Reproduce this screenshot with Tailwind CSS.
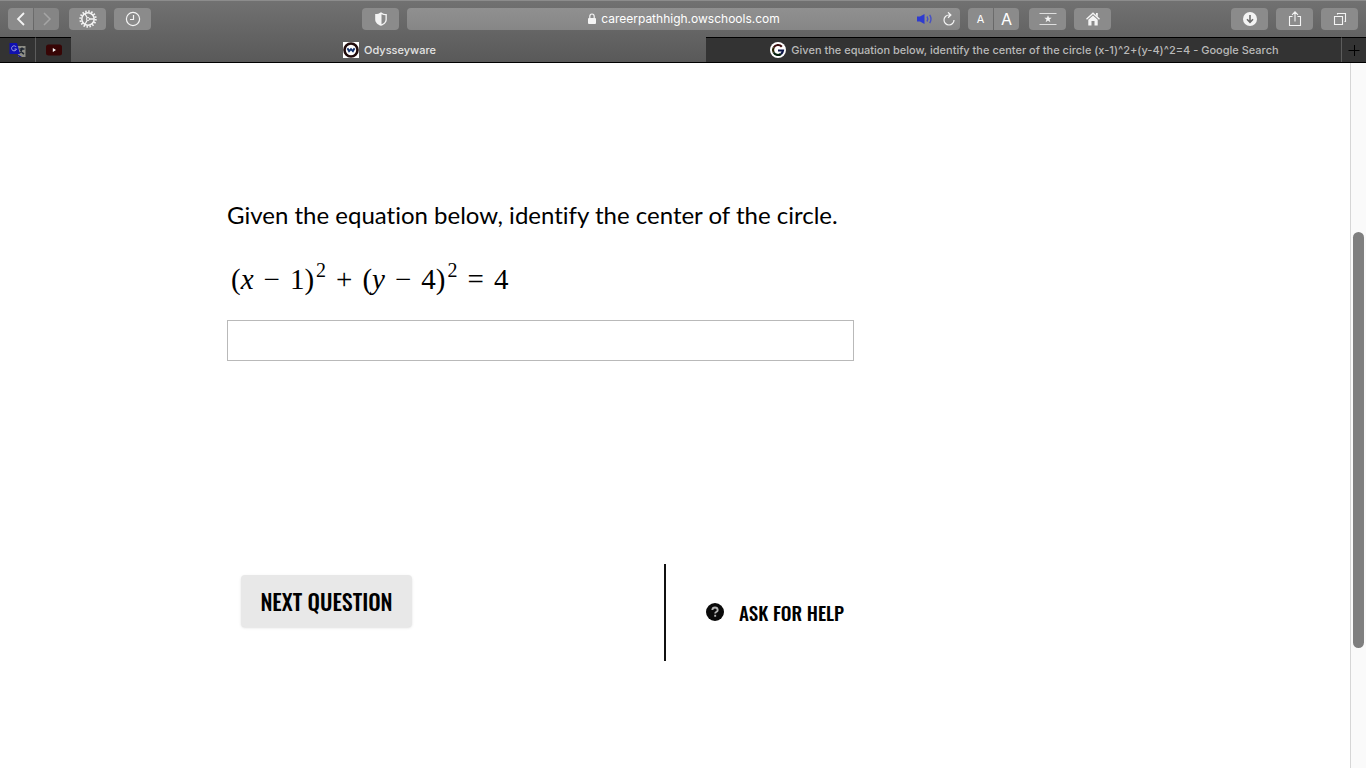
<!DOCTYPE html>
<html lang="en">
<head>
    <meta charset="UTF-8">
    <meta name="viewport" content="width=device-width, initial-scale=1.0">
    <title>Odysseyware</title>
    <script src="https://cdn.jsdelivr.net/npm/@tailwindcss/browser@4"></script>
</head>
<body class="flex h-screen flex-col overflow-hidden bg-white font-['Inter',sans-serif] text-black">

    <!-- Browser chrome -->
    <header class="shrink-0 border-t border-b border-t-[#8c8c8c] border-b-black bg-linear-to-b from-[#717171] to-[#595959]">

        <!-- Toolbar -->
        <div class="flex h-9 items-center gap-2 px-2 text-white">
            <div class="flex w-[391px] justify-between">
                <div class="flex gap-2">
                    <div class="mr-[2px] flex gap-px">
                        <button aria-label="Back" class="flex h-[22px] w-[25px] items-center justify-center rounded-l bg-[#8b8b8b]">
                            <svg class="h-4 w-4" viewBox="0 0 16 16" fill="none" stroke="#f4f4f4" stroke-width="1.8"><path d="M11 2 5 8l6 6"/></svg>
                        </button>
                        <button aria-label="Forward" class="flex h-[22px] w-[25px] items-center justify-center rounded-r bg-[#858585]">
                            <svg class="h-4 w-4" viewBox="0 0 16 16" fill="none" stroke="#a5a5a5" stroke-width="1.5"><path d="m5 2 6 6-6 6"/></svg>
                        </button>
                    </div>
                    <button aria-label="Settings" class="flex h-[22px] w-[37px] items-center justify-center rounded bg-[#8b8b8b]">
                        <svg class="h-[18px] w-[18px]" viewBox="0 0 18 18" fill="none" stroke="#f4f4f4">
                            <circle cx="9" cy="9" r="7.7" stroke-width="2" stroke-dasharray="1.5 1.524"/>
                            <circle cx="9" cy="9" r="6.2" stroke-width="1.5"/>
                            <circle cx="9" cy="9" r="1.5"/>
                            <path d="M10.5 9H15M8.2 7.7 6 3.8M8.2 10.3 6 14.2" stroke-width="1.3"/>
                        </svg>
                    </button>
                    <button aria-label="History" class="flex h-[22px] w-[37px] items-center justify-center rounded bg-[#8b8b8b]">
                        <svg class="h-4 w-4" viewBox="0 0 16 16" fill="none" stroke="#f4f4f4" stroke-width="1.2"><circle cx="8" cy="8" r="6.6"/><path d="M8.5 4v4.5H5"/></svg>
                    </button>
                </div>
                <button aria-label="Privacy report" class="flex h-[22px] w-[37px] items-center justify-center rounded bg-[#8b8b8b]">
                    <svg class="h-[14px] w-[14px]" viewBox="0 0 14 14"><path d="M7 .2c1.7 1.3 3.5 1.8 5.8 1.9v5.3c0 3.2-2.7 5.2-5.8 6.4-3.1-1.2-5.8-3.2-5.8-6.4V2.1C3.5 2 5.3 1.5 7 .2z" fill="#f4f4f4"/><path d="M7.5 2.2c1.2.7 2.6 1 4 1.1v4.1c0 2.3-1.7 3.9-4 4.9z" fill="#8b8b8b"/></svg>
                </button>
            </div>

            <div class="flex h-[22px] min-w-0 flex-1 items-center rounded bg-linear-to-b from-[#909090] to-[#868686] pr-1">
                <div class="w-11"></div>
                <div class="flex flex-1 items-center justify-center gap-1 text-[12px]">
                    <svg class="h-3 w-[10px]" viewBox="0 0 10 12"><rect x="1" y="5" width="8" height="6" rx="1" fill="#f4f4f4"/><path d="M2.8 5.5v-2a2.2 2.5 0 0 1 4.4 0v2" fill="none" stroke="#f4f4f4" stroke-width="1.2"/></svg>
                    <span>careerpathhigh.owschools.com</span>
                </div>
                <div class="flex gap-2">
                    <button aria-label="Mute this tab"><svg class="h-[14px] w-[18px]" viewBox="0 0 18 14"><path d="M1 4.5h3L8.500 2v10L4 9.500H1z" fill="#2e3bd0"/><path d="M11 4.500q1.600 2.500 0 5M13.700 2.800q2.600 4.200 0 8.400" fill="none" stroke="#4650c4" stroke-width="1.4"/></svg></button>
                    <button aria-label="Reload"><svg class="h-[14px] w-[14px]" viewBox="0 0 14 14" fill="none" stroke="#f4f4f4" stroke-width="1.2"><path d="M8.5 3H7a5 5 0 1 0 5 5M6 .3 8.900 3 6 5.800"/></svg></button>
                </div>
            </div>

            <div class="flex w-[390px] justify-between">
                <div class="flex gap-2">
                    <div class="mr-[2px] flex gap-px">
                        <button aria-label="Smaller text" class="h-[22px] w-[25px] rounded-l bg-[#8b8b8b] text-[11px]">A</button>
                        <button aria-label="Larger text" class="h-[22px] w-[25px] rounded-r bg-[#8b8b8b] text-[16px] leading-[22px]">A</button>
                    </div>
                    <button aria-label="Favorites" class="flex h-[22px] w-[37px] items-center justify-center rounded bg-[#8b8b8b]">
                        <svg class="h-[14px] w-[18px]" viewBox="0 0 18 14"><path d="M.5 1.5h17M.5 12.5h17" stroke="#dedede"/><path d="m9 3.200 1 2.600h2.700l-2.200 1.700.9 2.700L9 8.600l-2.400 1.600.9-2.700-2.200-1.700H8z" fill="#f4f4f4"/></svg>
                    </button>
                    <button aria-label="Home" class="flex h-[22px] w-[37px] items-center justify-center rounded bg-[#8b8b8b]">
                        <svg class="h-[14px] w-[14px]" viewBox="0 0 14 14"><path d="M.5 7.3 7 1.2l6.500 6.100" fill="none" stroke="#f4f4f4" stroke-width="1.4"/><path d="M10 1h1.800v4L10 3.300zM2.300 7.800 7 3.500l4.700 4.300V13.500H8.500V9h-3v4.500H2.300z" fill="#f4f4f4"/></svg>
                    </button>
                </div>
                <div class="flex gap-2">
                    <button aria-label="Downloads" class="flex h-[22px] w-[37px] items-center justify-center rounded bg-[#8b8b8b]">
                        <svg class="h-[14px] w-[14px]" viewBox="0 0 14 14"><circle cx="7" cy="7" r="7" fill="#f4f4f4"/><path d="M7 3v7M4 7.3l3 3 3-3" fill="none" stroke="#6e6e6e" stroke-width="1.6"/></svg>
                    </button>
                    <button aria-label="Share" class="flex h-[22px] w-[37px] items-center justify-center rounded bg-[#8b8b8b]">
                        <svg class="h-4 w-4" viewBox="0 0 16 16" fill="none" stroke="#f4f4f4" stroke-width="1.1"><path d="M5.5 5.5h-3v9h11v-9h-3M8 10.500V1M5 3.800l3-3 3 3"/></svg>
                    </button>
                    <button aria-label="Show all tabs" class="flex h-[22px] w-[37px] items-center justify-center rounded bg-[#8b8b8b]">
                        <svg class="h-[14px] w-[14px]" viewBox="0 0 14 14" fill="none" stroke="#f4f4f4" stroke-width="1.1"><path d="M1.5 4.500h8v8h-8zM4.500 2.500v-1h8v8h-1"/></svg>
                    </button>
                </div>
            </div>
        </div>

        <!-- Tabs -->
        <nav class="flex h-[25px] text-[11px] font-medium">
            <a href="#" aria-label="Google Translate" class="flex w-9 items-center justify-center border-t border-r border-t-black border-r-[#5c5c5c] bg-[#333333]">
                <svg class="h-4 w-[17px]" viewBox="0 0 17 16"><path d="M7 4h9.500v11H9.500z" fill="#8e8e86"/><path d="m8 12 2 3h3z" fill="#10108a"/><path d="M10.500 7h5M13 5.500V7q-.5 3-2.500 4M11.500 8q1 2.500 3.500 4" stroke="#1c2430" stroke-width="1.500" fill="none"/><path d="M.5 1h7.500l3 11H.5z" fill="#1010b0"/><path d="M7.200 5A2.500 2.500 0 1 0 7.500 7H5.500" fill="none" stroke="#9b9be0"/></svg>
            </a>
            <a href="#" aria-label="YouTube" class="flex w-[35px] items-center justify-center border-t border-black bg-[#333333]">
                <svg class="h-3 w-4" viewBox="0 0 16 12"><rect y=".5" width="16" height="11" rx="2.5" fill="#370505"/><path d="M6.800 4v4L10 6z" fill="#fff"/></svg>
            </a>
            <a href="#" class="flex flex-1 items-center justify-center gap-[5px] border-t border-transparent pl-[2px] text-[#e4e4e4]">
                <svg class="h-4 w-4" viewBox="0 0 16 16"><path d="M0 0h16v16H0z" fill="#fff"/><circle cx="8" cy="8" r="6.500" fill="#fff" stroke="#200b0b" stroke-width="2.600"/><path d="m4.500 6.300 1.600 2.900L8 7.200l1.900 2 1.600-2.900" fill="none" stroke="#12306b" stroke-width="1.900"/></svg>
                <span>Odysseyware</span>
            </a>
            <a href="#" class="flex flex-1 items-center justify-center gap-[5px] border-t border-black bg-[#333333] pl-[2px] text-[#b9b9b9]">
                <svg class="h-4 w-4" viewBox="0 0 16 16"><circle cx="8" cy="8" r="8" fill="#fff"/><path d="M11.800 4.700A5 5 0 0 0 3.700 5.500" fill="none" stroke="#3a0c0c" stroke-width="2.200"/><path d="M3.700 5.500a5 5 0 0 0 0 5" fill="none" stroke="#262200" stroke-width="2.200"/><path d="M3.700 10.500a5 5 0 0 0 7.300 1.500" fill="none" stroke="#04200c" stroke-width="2.200"/><path d="M11 12a5 5 0 0 0 2-3.500H8" fill="none" stroke="#0b1548" stroke-width="2.200"/></svg>
                <span class="whitespace-nowrap">Given the equation below, identify the center of the circle (x-1)^2+(y-4)^2=4 - Google Search</span>
            </a>
            <button aria-label="New tab" class="flex w-[25px] items-center justify-center border-t border-l border-t-black border-l-[#5c5c5c] bg-[#333333]">
                <svg class="h-3 w-3" viewBox="0 0 12 12" stroke="#000"><path d="M.5 6.500h11M6.500 1v11"/></svg>
            </button>
        </nav>
    </header>

    <div class="flex min-h-0 flex-1">
        <!-- Question -->
        <main class="flex-1 pt-[136px] pl-[227px]">
            <div class="w-full max-w-[627px]">
                <label for="answer" class="block">
                    <span class="block font-['Lato',sans-serif] text-[24px] leading-8 whitespace-nowrap [font-variant-ligatures:none]">Given the equation below, identify the center of the circle.</span>
                    <span class="mt-7 flex h-10 items-center gap-[10px] pl-1 font-['Liberation_Serif',serif] text-[29px] leading-10">
                        <span>(<i>x</i></span><span>−</span><span>1)<sup class="-top-3 pl-[2px] text-[20px]">2</sup></span>
                        <span>+</span>
                        <span>(<i>y</i></span><span>−</span><span>4)<sup class="-top-3 pl-[2px] text-[20px]">2</sup></span>
                        <span>=</span><span>4</span>
                    </span>
                </label>
                <input id="answer" type="text" class="mt-[21px] block h-[41px] w-full border border-[#b9b9b9] px-2 text-xl outline-none">

                <div class="mt-[203px] flex font-['Oswald','Liberation_Sans_Narrow',sans-serif] font-medium">
                    <div class="flex-1 pt-[11px] pl-[14px]">
                        <button class="h-[52px] w-[171px] rounded bg-[#e8e8e8] text-[22px] whitespace-nowrap shadow-sm">NEXT QUESTION</button>
                    </div>
                    <div class="flex h-[97px] w-[190px] items-center border-l-2 border-[#111111] pl-[39px]">
                        <a href="#" class="flex items-center gap-[14px] text-[19px] whitespace-nowrap">
                            <svg class="h-5 w-5" viewBox="0 0 20 20"><circle cx="10" cy="9" r="9" fill="#0a0a0a"/><path d="M7.300 7q.2-2.500 2.700-2.500T12.700 7q0 1.300-1.500 2-1 .5-1 1.600M10.200 11.800v2" fill="none" stroke="#b5b5b5" stroke-width="1.900"/></svg>
                            <span>ASK FOR HELP</span>
                        </a>
                    </div>
                </div>
            </div>
        </main>

        <!-- Scrollbar -->
        <div class="w-4 border-l border-[#d6d6d6] bg-[#fafafa] px-[2px] pt-[169px]">
            <div class="h-[416px] w-[11px] rounded-full bg-[#7f7f7f]"></div>
        </div>
    </div>

</body>
</html>
